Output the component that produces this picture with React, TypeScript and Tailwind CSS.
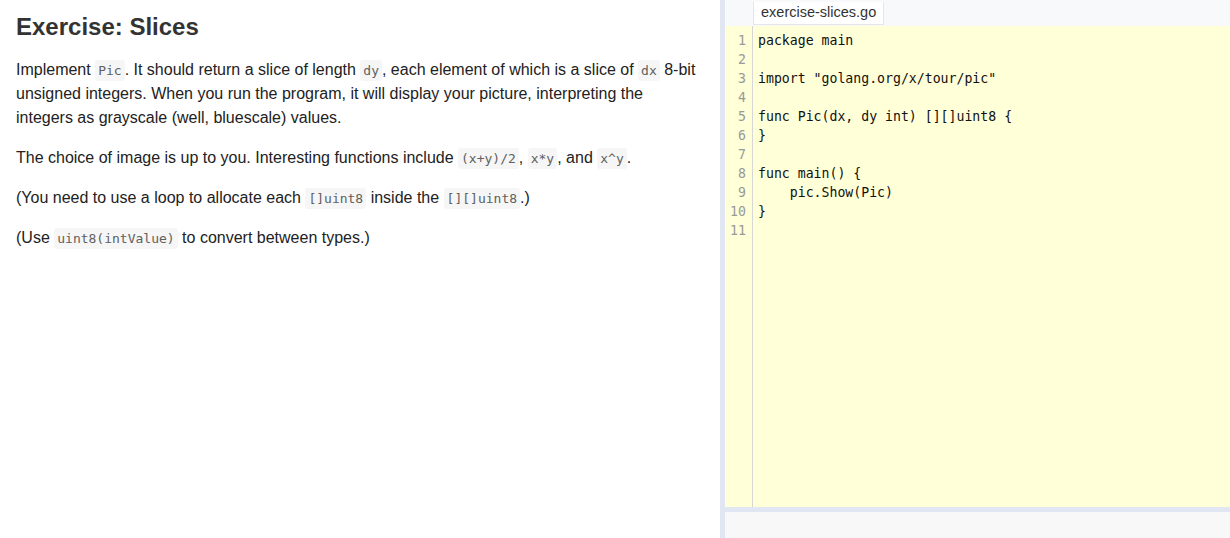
import React from "react";

const sans = "font-['Liberation_Sans',Arial,sans-serif]";
const mono = "font-['DejaVu_Sans_Mono',monospace]";

function C({ children }: { children: React.ReactNode }) {
  return (
    <code
      className={`${mono} text-[13px] leading-[14px] text-[#606060] bg-[#f6f6f6] rounded-[3px] px-[3px] py-[3px]`}
    >
      {children}
    </code>
  );
}

const codeLines = [
  "package main",
  "",
  'import "golang.org/x/tour/pic"',
  "",
  "func Pic(dx, dy int) [][]uint8 {",
  "}",
  "",
  "func main() {",
  "    pic.Show(Pic)",
  "}",
  "",
];

export default function App() {
  return (
    <div className={`flex h-[538px] w-[1230px] bg-white overflow-hidden ${sans}`}>
      <div className="w-[720px] shrink-0 pl-4 pr-6">
        <h2 className="mt-[15px] text-[24px] leading-[24px] font-bold text-[#333333]">
          Exercise: Slices
        </h2>
        <div className="mt-[19px] text-[16px] leading-[24px] text-[#222222] flex flex-col gap-4">
          <p>
            Implement <C>Pic</C>. It should return a slice of length <C>dy</C>, each element of which is a slice
            of <C>dx</C> 8-bit unsigned integers. When you run the program, it will display your picture,
            interpreting the integers as grayscale (well, bluescale) values.
          </p>
          <p>
            The choice of image is up to you. Interesting functions include <C>(x+y)/2</C>, <C>x*y</C>, and{" "}
            <C>x^y</C>.
          </p>
          <p>
            (You need to use a loop to allocate each <C>[]uint8</C> inside the <C>[][]uint8</C>.)
          </p>
          <p>
            (Use <C>uint8(intValue)</C> to convert between types.)
          </p>
        </div>
      </div>
      <div className="w-[5px] shrink-0 bg-[#e0e7f2]" />
      <div className="flex-1 flex flex-col">
        <div className="h-[26px] shrink-0 bg-[#f8f9fa] pl-[28px]">
          <div className="inline-block h-[23px] border border-t-0 border-[#e6e6e6] bg-white px-[7px] text-[14.5px] leading-[20px] text-[#333333]">
            exercise-slices.go
          </div>
        </div>
        <div className={`flex-1 flex bg-[#ffffd8] ${mono} text-[13.2px] leading-[19px]`}>
          <div className="w-[28px] shrink-0 border-r border-[#d6d6d6] pt-[5px] pr-[6px] text-right text-[#999999]">
            {codeLines.map((_, i) => (
              <div key={i}>{i + 1}</div>
            ))}
          </div>
          <div className="flex-1 pt-[5px] pl-[5px] text-[#111111] whitespace-pre">
            {codeLines.map((l, i) => (
              <div key={i} className="h-[19px]">
                {l}
              </div>
            ))}
          </div>
        </div>
        <div className="h-[5px] shrink-0 bg-[#e0e7f2]" />
        <div className="h-[26px] shrink-0 bg-[#f8f8f8]" />
      </div>
    </div>
  );
}
